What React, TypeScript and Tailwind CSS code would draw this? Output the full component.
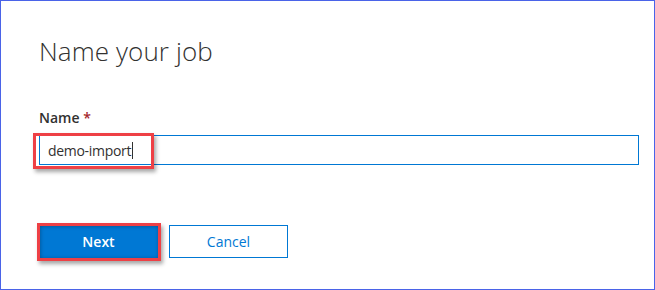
import React from "react";

const font = { fontFamily: '"Open Sans", "Liberation Sans", sans-serif' };

export default function App() {
  return (
    <div
      className="w-[655px] h-[290px] border border-[#4a63e8] bg-white pl-[38px] pr-[15px] pt-[32px]"
      style={font}
    >
      <h1 className="text-[26px] leading-[36px] font-light text-[#323130] tracking-[0.1px]">
        Name your job
      </h1>

      <div className="mt-[39px] text-[14px] leading-[20px] font-semibold text-[#323130]">
        Name <span className="text-[#a4262c]">*</span>
      </div>

      <div className="relative mt-[7px]">
        <div className="h-[30px] border border-[#0078d4] bg-white flex items-center pl-[8px] text-[14px] text-[#323130] tracking-[-0.3px]">
          demo-import
          <span className="inline-block w-px h-[17px] bg-[#323130] ml-px" />
        </div>
        {/* annotation highlight */}
        <div className="absolute left-[-6px] top-[-2px] w-[121px] h-[36px] border-[3px] border-[#ee4045] shadow-[2px_3px_4px_rgba(0,0,0,0.35)]" />
      </div>

      <div className="mt-[60px] flex items-center gap-[11px]">
        <div className="relative">
          <button className="w-[119px] h-[33px] bg-[#0078d4] text-white text-[14px] font-semibold shadow-[inset_1px_1px_4px_rgba(0,0,0,0.35)]">
            Next
          </button>
          <div className="absolute left-[-2px] top-[-2px] right-[-3px] bottom-[-3px] border-[3px] border-[#ee4045] shadow-[2px_3px_4px_rgba(0,0,0,0.35)]" />
        </div>
        <button className="w-[119px] h-[33px] border border-[#0078d4] bg-white text-[#0078d4] text-[14px]">
          Cancel
        </button>
      </div>
    </div>
  );
}
